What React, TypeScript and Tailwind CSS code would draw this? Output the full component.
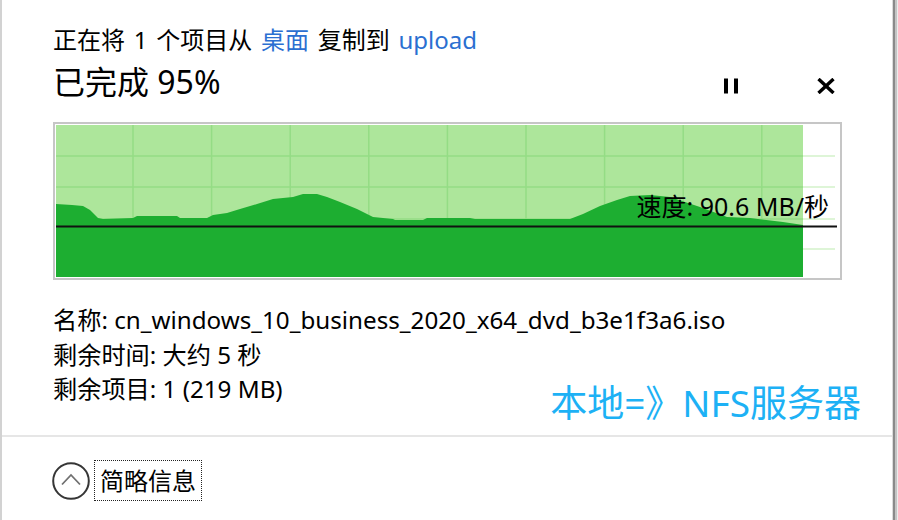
import React from "react";

// ===== CONSTANTS =====
const FONT = "font-['Noto_Sans','Noto_Sans_CJK_SC',sans-serif]";
const LINK = "text-[#2b6fd1]";

const CHART_W = 782;
const CHART_H = 152;
const DONE_W = 747; // 95% of the graph

const speedPoints: [number, number][] = [
  [0, 79], [16, 80], [27, 81], [34, 85], [42, 93], [47, 94], [77, 93], [81, 91],
  [121, 91], [124, 93], [151, 93], [157, 90], [171, 88], [184, 84], [201, 79],
  [217, 74], [237, 72], [247, 69], [261, 69], [271, 72], [284, 77], [301, 84],
  [317, 92], [337, 94], [339, 95], [367, 95], [371, 93], [414, 93], [419, 94],
  [514, 94], [527, 89], [544, 81], [561, 75], [574, 71], [594, 70], [614, 72],
  [644, 82], [671, 92], [694, 93], [727, 97], [747, 100],
];

const rowLines = [31, 62, 94, 124];
const colLines = Array.from({ length: 9 }, (_, i) => 77 + i * 78.6);

// ===== SUB-COMPONENTS =====
const SpeedChart = () => {
  const poly = [...speedPoints, [DONE_W, CHART_H], [0, CHART_H]]
    .map(([x, y]) => `${x},${y}`)
    .join(" ");

  return (
    <div className="relative w-[789px] border-2 border-[#c6c6c6] bg-white p-px">
      <svg width={CHART_W} height={CHART_H} className="block">
        {/* pale grid across the whole graph */}
        {rowLines.map((y) => (
          <line key={`w${y}`} x1={0} x2={779} y1={y} y2={y} stroke="#d3f2ca" strokeWidth={1.5} />
        ))}
        <rect x={0} y={0} width={DONE_W} height={CHART_H} fill="#ade69b" />
        {rowLines.map((y) => (
          <line key={`r${y}`} x1={0} x2={DONE_W} y1={y} y2={y} stroke="#94dc85" strokeWidth={1.5} />
        ))}
        {colLines.map((x) => (
          <line key={`c${x}`} x1={x} x2={x} y1={0} y2={CHART_H} stroke="#94dc85" strokeWidth={1.5} />
        ))}
        <polygon points={poly} fill="#1dae31" />
        <line x1={0} x2={781} y1={101.5} y2={101.5} stroke="#111" strokeWidth={2} />
      </svg>
      <span className="absolute right-[11px] top-[66px] whitespace-nowrap text-[25px] leading-[32px] text-black">
        速度: 90.6 MB/秒
      </span>
    </div>
  );
};

const PauseIcon = () => (
  <svg width="14" height="16" viewBox="0 0 14 16">
    <rect x="0" y="0.5" width="4" height="15" fill="#000" />
    <rect x="10" y="0.5" width="4" height="15" fill="#000" />
  </svg>
);

const CloseIcon = () => (
  <svg width="18" height="16" viewBox="0 0 18 16">
    <path d="M1.5 1 L16.5 15 M16.5 1 L1.5 15" stroke="#000" strokeWidth="3.4" />
  </svg>
);

const CollapseIcon = () => (
  <svg width="38" height="38" viewBox="0 0 38 38">
    <circle cx="19" cy="19" r="17.8" fill="none" stroke="#363636" strokeWidth="2" />
    <path d="M10 22.5 L19 13 L28 22.5" fill="none" stroke="#707070" strokeWidth="1.8" />
  </svg>
);

// ===== MAIN COMPONENT =====
export default function App() {
  return (
    <div className={`flex h-[520px] w-[898px] bg-white text-black ${FONT}`}>
      <div className="flex flex-1 flex-col border-l-2 border-[#d2d2d2]">
        {/* Header */}
        <div className="pl-[51px] pt-[25px]">
          <p className="whitespace-nowrap text-[24px] leading-[30px] [word-spacing:2.5px]">
            正在将 1 个项目从 <span className={LINK}>桌面</span> 复制到{" "}
            <span className={LINK}>upload</span>
          </p>
          <div className="mt-[7px] flex w-[789px] items-center justify-between">
            <h1 className="text-[32px] font-normal leading-[38px]">已完成 95%</h1>
            <div className="mt-[8px] flex items-center gap-[63px]">
              <button type="button" className="flex size-[32px] items-center justify-center">
                <PauseIcon />
              </button>
              <button type="button" className="flex size-[32px] items-center justify-center">
                <CloseIcon />
              </button>
            </div>
          </div>

          {/* Graph */}
          <div className="mt-[20px]">
            <SpeedChart />
          </div>

          {/* Details, with the note laid over the same grid cell */}
          <div className="mt-[23px] grid pr-[31px]">
            <div className="col-start-1 row-start-1 whitespace-nowrap text-[24.2px] leading-[34.5px]">
              <p>名称: cn_windows_10_business_2020_x64_dvd_b3e1f3a6.iso</p>
              <p>剩余时间: 大约 5 秒</p>
              <p>剩余项目: 1 (219 MB)</p>
            </div>
            <p className="col-start-1 row-start-1 mt-[78px] justify-self-end whitespace-nowrap text-[37px] leading-[44px] text-[#1db1f5]">
              本地=》NFS服务器
            </p>
          </div>
        </div>

        <div className="mt-[10px] h-[2px] bg-[#e6e6e6]" />

        {/* Footer */}
        <div className="flex items-center gap-[4px] pl-[50px] pt-[23px]">
          <CollapseIcon />
          <button
            type="button"
            className="border border-dotted border-[#222] px-[5px] text-[24px] leading-[39px]"
          >
            简略信息
          </button>
        </div>
      </div>

      {/* Window edge */}
      <div className="flex w-[6px]">
        <div className="w-[1px] bg-[#dcdcdc]" />
        <div className="w-[2px] bg-[#8a8a8a]" />
        <div className="w-[2px] bg-[#c4c4c4]" />
        <div className="w-[1px] bg-[#ececec]" />
      </div>
    </div>
  );
}
